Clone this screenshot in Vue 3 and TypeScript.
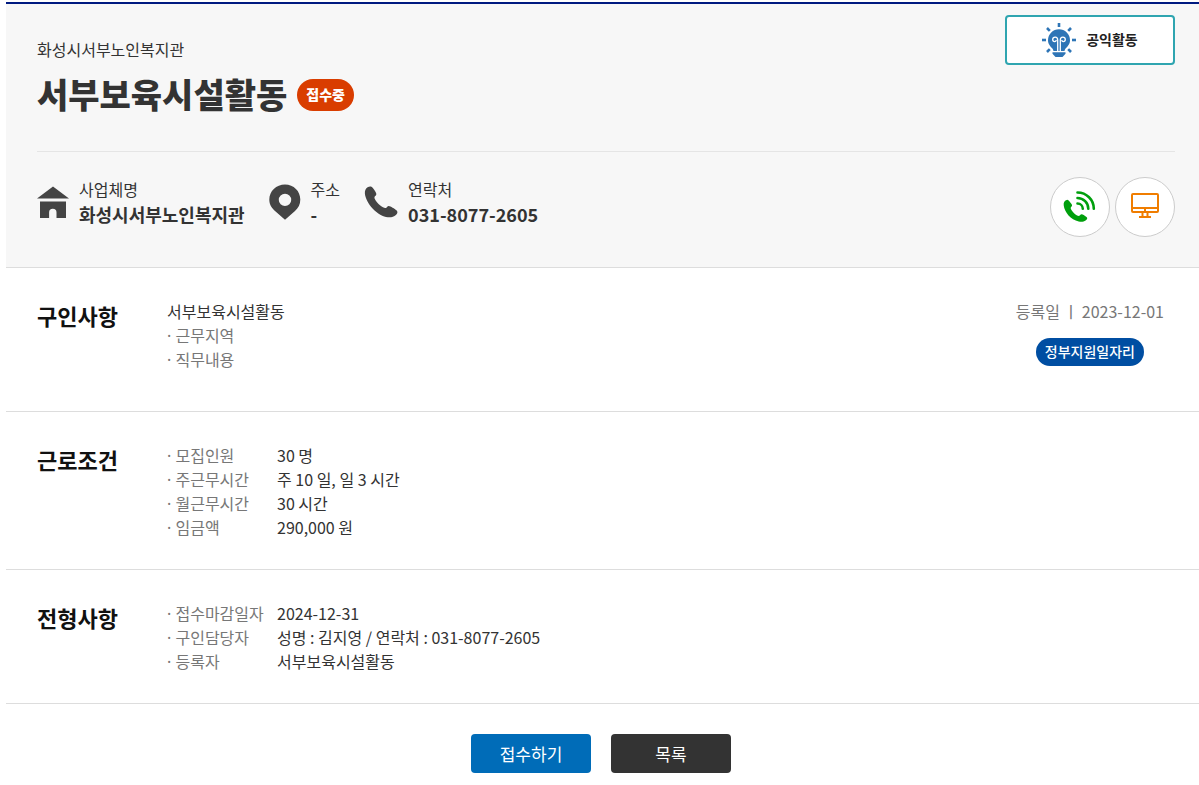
<script setup lang="ts">
interface Row {
  label: string
  value: string
}

interface Section {
  title: string
  rows: Row[]
}

const sections: Section[] = [
  {
    title: '근로조건',
    rows: [
      { label: '모집인원', value: '30 명' },
      { label: '주근무시간', value: '주 10 일, 일 3 시간' },
      { label: '월근무시간', value: '30 시간' },
      { label: '임금액', value: '290,000 원' },
    ],
  },
  {
    title: '전형사항',
    rows: [
      { label: '접수마감일자', value: '2024-12-31' },
      { label: '구인담당자', value: '성명 : 김지영 / 연락처 : 031-8077-2605' },
      { label: '등록자', value: '서부보육시설활동' },
    ],
  },
]

const rays: number[] = [0, 45, 90, 135, 225, 270, 315]
</script>

<template>
  <main class="page">
    <header class="head">
      <div class="head-top">
        <div>
          <p class="org">화성시서부노인복지관</p>
          <div class="title-row">
            <h1 class="title">서부보육시설활동</h1>
            <span class="status">접수중</span>
          </div>
        </div>
        <div class="category">
          <svg width="34" height="34" viewBox="0 0 34 34" aria-hidden="true">
            <g stroke="#2e75b6" stroke-width="2.600">
              <path v-for="r in rays" :key="r" d="M17 0v4" :transform="`rotate(${r} 17 17)`" />
            </g>
            <path fill="#2e75b6" d="M17 6.200a11 11 0 0 0-11 11c0 4 2.400 6.200 4.400 8.400.8 1 1 1.800 1.200 3h10.800c.2-1.200.4-2 1.200-3 2-2.200 4.400-4.400 4.400-8.400A11 11 0 0 0 17 6.200z" />
            <path fill="none" stroke="#fff" stroke-width="1.300" d="M15.700 28V17.200c0-2-1-3-2.500-3s-2.500 1-2.500 2.300 1 2.100 2 2.100 1.500-.7 1.400-1.600M18.300 28V17.200c0-2 1-3 2.500-3s2.500 1 2.500 2.300-1 2.100-2 2.100-1.500-.7-1.400-1.600" />
            <path stroke="#fff" stroke-width="1" d="M10 28.500h14" />
            <path fill="#2e75b6" d="M10.500 29.200h13v1.600l-3 3.200h-7l-3-3.200z" />
          </svg>
          <strong>공익활동</strong>
        </div>
      </div>

      <div class="head-info">
        <dl class="facts">
          <div class="fact">
            <svg width="32" height="32" viewBox="0 0 32 32" aria-hidden="true">
              <path fill="#444" d="M16 .5 32 12.500H0zM3 15.500h26V32h-9.500v-5.500a3.700 3.700 0 0 0-7.400 0V32H3z" />
            </svg>
            <div>
              <dt>사업체명</dt>
              <dd>화성시서부노인복지관</dd>
            </div>
          </div>
          <div class="fact">
            <svg width="32" height="36" viewBox="0 0 32 36" aria-hidden="true">
              <path fill="#444" fill-rule="evenodd" d="M16 .5C7.200.5.3 7.200.3 15.500c0 5 2.300 8.300 5.700 11.500L16 35.800 26 27c3.400-3.200 5.300-6.500 5.300-11.500C31.300 7.200 24.800.5 16 .5zm0 9.200a6.200 6.200 0 1 1 0 12.400 6.200 6.200 0 0 1 0-12.400z" />
            </svg>
            <div>
              <dt>주소</dt>
              <dd>-</dd>
            </div>
          </div>
          <div class="fact">
            <svg width="34" height="32" viewBox="0 0 34 32" aria-hidden="true">
              <path fill="#444" d="M6.800.5C8.300.7 9.800 3 11.300 5.500c1.400 2.300 1.300 3.300.3 4.200-1 .8-1.500 1.700-.9 3 1 2.300 3.200 5 5.600 6.900 2 1.600 3.900 2.700 5.300 2.500 1.300-.2 1.700-2.300 3.200-2.200 1.700.1 6 2.800 7.600 4.300 1.500 1.400 1.400 3.200-.5 4.900-2 1.900-5 2.500-8.100 2.200-4.500-.5-10.500-3.800-15-8.600C4.600 18.200 1.300 12.200.9 7.700.6 4.400 1.800 2.500 3.600 1.300 4.800.5 5.800.4 6.800.5z" />
            </svg>
            <div>
              <dt>연락처</dt>
              <dd>031-8077-2605</dd>
            </div>
          </div>
        </dl>
        <nav class="quick">
          <a href="#call" aria-label="전화">
            <svg width="34" height="34" viewBox="0 0 34 34" aria-hidden="true">
              <path fill="#009f0d" d="M4.300 9.700c1.300.2 3.300 2.800 4.400 4.600.8 1.400.1 2-.6 2.800-.8.9-.3 2 .5 3.200 1.400 2.200 3.300 4 5.500 5.200 1.300.7 2.200.6 2.900-.2.700-.8 1.300-1.300 2.500-.8 1.600.7 3.700 2 4.500 3.100.6 1 0 2-1.400 3-1.900 1.300-4.400 1.500-6.900.9C7.800 29.800 1.500 22.500.7 15.300c-.3-3 .7-5 3.600-5.600z" />
              <path fill="none" stroke="#009f0d" stroke-width="2.600" stroke-linecap="round" d="M14.500 13.500a5.300 5.300 0 0 1 5.300 5.300M14.500 8a10.800 10.800 0 0 1 10.800 10.800M14.500 2.500a16.300 16.300 0 0 1 16.300 16.300" />
            </svg>
          </a>
          <a href="#online" aria-label="온라인">
            <svg width="28" height="28" viewBox="0 0 28 28" aria-hidden="true">
              <g fill="none" stroke="#f07d00" stroke-width="2">
                <rect x="1" y="1" width="26" height="18" rx="1" />
                <path d="M1 15h26M14 15v4M11.500 19v5M16.500 19v5M8 24h12" />
              </g>
            </svg>
          </a>
        </nav>
      </div>
    </header>

    <section class="section">
      <h2>구인사항</h2>
      <div class="body">
        <p>서부보육시설활동</p>
        <p class="label"><span class="dot">· </span>근무지역</p>
        <p class="label"><span class="dot">· </span>직무내용</p>
      </div>
      <div class="aside">
        <p class="date">등록일 ㅣ 2023-12-01</p>
        <span class="pill">정부지원일자리</span>
      </div>
    </section>

    <section v-for="s in sections" :key="s.title" class="section">
      <h2>{{ s.title }}</h2>
      <dl class="body rows">
        <template v-for="r in s.rows" :key="r.label">
          <dt class="label"><span class="dot">· </span>{{ r.label }}</dt>
          <dd>{{ r.value }}</dd>
        </template>
      </dl>
    </section>

    <div class="actions">
      <button type="button" class="apply">접수하기</button>
      <button type="button" class="list">목록</button>
    </div>
  </main>
</template>

<style>
body {
  margin: 0;
  background: #fff;
}
</style>

<style scoped>
.page {
  padding: 2px 0 12px 6px;
  font-family: "Noto Sans CJK KR", "Noto Sans", sans-serif;
  font-size: 16px;
  line-height: 24px;
  color: #333;
}
p, h1, h2, dl, dd {
  margin: 0;
}
svg {
  display: block;
  flex: none;
}
.head {
  padding: 0 24px 0 31px;
  background: #f7f7f7;
  border-top: 2px solid #001a80;
  border-bottom: 1px solid #ddd;
}
.head-top {
  display: flex;
  justify-content: space-between;
  align-items: flex-start;
  padding: 11px 0 32px;
  border-bottom: 1px solid #e5e5e5;
}
.org {
  padding-top: 22px;
}
.title-row {
  display: flex;
  align-items: center;
  gap: 10px;
  margin-top: 10px;
}
.title {
  padding-bottom: 2px;
  font-size: 34px;
  line-height: 46px;
  font-weight: 900;
}
.status {
  padding: 0 9px 2px;
  border-radius: 16px;
  background: #d93d00;
  color: #fff;
  font-size: 14px;
  line-height: 30px;
  font-weight: 900;
}
.category {
  display: flex;
  align-items: center;
  justify-content: center;
  gap: 10px;
  box-sizing: border-box;
  width: 170px;
  height: 50px;
  border: 2px solid #2fa5b0;
  border-radius: 4px;
  background: #fff;
  color: #222;
  font-size: 14px;
}
.category strong {
  padding-bottom: 2px;
}
.head-info {
  display: flex;
  justify-content: space-between;
  align-items: center;
  padding: 25px 0 30px;
}
.facts {
  display: flex;
  gap: 24px;
}
.fact {
  display: flex;
  align-items: center;
  gap: 10px;
  padding-bottom: 10px;
}
.fact dd {
  font-size: 18px;
  line-height: 26px;
  font-weight: 700;
}
.quick {
  display: flex;
  gap: 5px;
}
.quick a {
  display: flex;
  align-items: center;
  justify-content: center;
  box-sizing: border-box;
  width: 60px;
  height: 60px;
  border: 1px solid #ccc;
  border-radius: 50%;
  background: #fff;
}
.section {
  display: flex;
  align-items: flex-start;
  padding: 31px 35px 30px 31px;
  border-bottom: 1px solid #ddd;
}
.section h2 {
  width: 130px;
  flex: none;
  font-size: 22px;
  line-height: 32px;
  font-weight: 700;
  color: #111;
}
.body {
  flex: 1;
}
.label {
  color: #777;
}
.dot {
  font-family: "Noto Sans", sans-serif;
  line-height: 1;
}
.rows {
  display: grid;
  grid-template-columns: 110px 1fr;
}
.aside {
  display: flex;
  flex-direction: column;
  align-items: center;
  gap: 15px;
  padding-bottom: 15px;
}
.date {
  color: #777;
}
.pill {
  padding: 0 9px 2px;
  border-radius: 14px;
  background: #004ea2;
  color: #fff;
  font-size: 14px;
  line-height: 26px;
  font-weight: 500;
}
.actions {
  display: flex;
  justify-content: center;
  gap: 20px;
  padding: 30px 3px 0 0;
}
.actions button {
  width: 120px;
  height: 39px;
  padding: 0;
  border: 0;
  border-radius: 4px;
  color: #fff;
  font: inherit;
  font-size: 17px;
  cursor: pointer;
}
.apply {
  background: #006cb8;
}
.list {
  background: #333;
}
</style>
